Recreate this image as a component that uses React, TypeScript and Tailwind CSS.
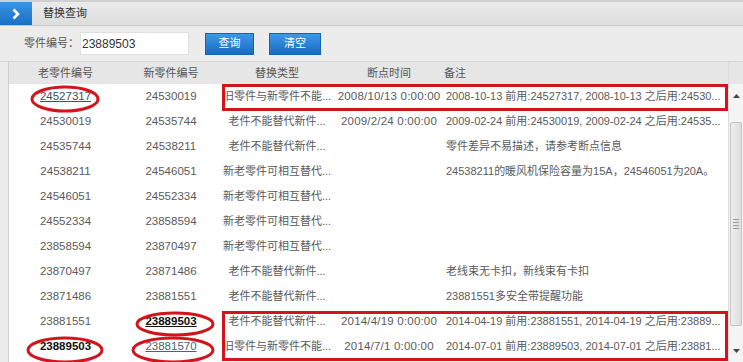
import React from "react";

const rows: { c: string[] }[] = [
  { c: ["24527317", "24530019", "旧零件与新零件不能...", "2008/10/13 0:00:00", "2008-10-13 前用:24527317, 2008-10-13 之后用:24530..."] },
  { c: ["24530019", "24535744", "老件不能替代新件...", "2009/2/24 0:00:00", "2009-02-24 前用:24530019, 2009-02-24 之后用:24535..."] },
  { c: ["24535744", "24538211", "老件不能替代新件...", "", "零件差异不易描述，请参考断点信息"] },
  { c: ["24538211", "24546051", "新老零件可相互替代...", "", "24538211的暖风机保险容量为15A，24546051为20A。"] },
  { c: ["24546051", "24552334", "新老零件可相互替代...", "", ""] },
  { c: ["24552334", "23858594", "新老零件可相互替代...", "", ""] },
  { c: ["23858594", "23870497", "新老零件可相互替代...", "", ""] },
  { c: ["23870497", "23871486", "老件不能替代新件...", "", "老线束无卡扣，新线束有卡扣"] },
  { c: ["23871486", "23881551", "老件不能替代新件...", "", "23881551多安全带提醒功能"] },
  { c: ["23881551", "23889503", "老件不能替代新件...", "2014/4/19 0:00:00", "2014-04-19 前用:23881551, 2014-04-19 之后用:23889..."] },
  { c: ["23889503", "23881570", "旧零件与新零件不能...", "2014/7/1 0:00:00", "2014-07-01 前用:23889503, 2014-07-01 之后用:23881..."] },
];

function cellStyle(r: number, col: number): string {
  if (r === 0 && col === 0) return "underline text-[#3d4f66]";
  if (r === 9 && col === 1) return "underline font-bold text-[#111]";
  if (r === 10 && col === 0) return "font-bold text-[#111]";
  if (r === 10 && col === 1) return "underline text-[#4a6080]";
  return "";
}

export default function App() {
  const font = { fontFamily: '"Liberation Sans", "Noto Sans CJK SC", sans-serif' };
  return (
    <div
      className="relative w-[743px] h-[362px] overflow-hidden bg-[#ececec] text-[11px] text-[#5a5a5a] flex flex-col"
      style={font}
    >
      {/* title bar */}
      <div className="h-[26px] flex items-stretch border-t-[2px] border-[#cfcfcf] border-b border-b-[#c8c8c8] bg-gradient-to-b from-[#ebebeb] to-[#dddddd]">
        <div className="w-[32px] flex items-center justify-center bg-gradient-to-b from-[#3a94e4] to-[#1a6fc6]">
          <svg width="10" height="12" viewBox="0 0 10 12">
            <path d="M2.5 1.5 L7 6 L2.5 10.5" stroke="#fff" strokeWidth="2.6" fill="none" />
          </svg>
        </div>
        <div className="flex items-center pl-[11px] text-[#333]">替换查询</div>
      </div>

      {/* search row */}
      <div className="h-[36px] flex items-center pl-[24px] border-b border-[#d6d6d6]">
        <span className="text-[#555]">零件编号：</span>
        <div className="ml-[1px] w-[109px] h-[23px] bg-white border border-[#e0e0e0] flex items-center pl-[1px] text-[12px] text-[#333]">
          23889503
        </div>
        <button className="ml-[16px] w-[49px] h-[22px] text-white text-[11px] bg-gradient-to-b from-[#3d98e6] to-[#166cc4] border border-[#1462b2]">
          查询
        </button>
        <button className="ml-[15px] w-[52px] h-[22px] text-white text-[11px] bg-gradient-to-b from-[#3d98e6] to-[#166cc4] border border-[#1462b2]">
          清空
        </button>
      </div>

      {/* table area */}
      <div className="flex flex-1 pl-[8px]">
        <div className="w-[720px] flex flex-col bg-white border-l border-[#d0d0d0]">
          <div className="h-[22px] flex items-center bg-[#e6e6e6] text-[#555]">
            <div className="w-[113px] text-center">老零件编号</div>
            <div className="w-[98px] text-center">新零件编号</div>
            <div className="w-[114px] text-center">替换类型</div>
            <div className="w-[110px] text-center">断点时间</div>
            <div className="flex-1">备注</div>
          </div>
          {rows.map((row, r) => (
            <div key={r} className="h-[25px] flex items-center whitespace-nowrap">
              <div className="w-[113px] text-center text-[11.5px]">
                <span className={cellStyle(r, 0)}>{row.c[0]}</span>
              </div>
              <div className="w-[98px] text-center text-[11.5px]">
                <span className={cellStyle(r, 1)}>{row.c[1]}</span>
              </div>
              <div className="w-[114px] text-center">{row.c[2]}</div>
              <div className="w-[110px] text-center text-[11.5px] tracking-[0.2px]">{row.c[3]}</div>
              <div className="flex-1 pl-[2px] overflow-hidden">{row.c[4]}</div>
            </div>
          ))}
        </div>

        {/* scrollbar */}
        <div className="w-[15px] flex flex-col bg-[#f4f4f4] border-l border-[#dcdcdc]">
          <div className="h-[22px] bg-[#e6e6e6]" />
          <div className="h-[24px] flex items-center justify-center">
            <svg width="7" height="4" viewBox="0 0 7 4">
              <path d="M0 4 L3.5 0 L7 4 Z" fill="#444" />
            </svg>
          </div>
          <div className="flex-1 flex flex-col px-[1px] py-[14px]">
            <div className="flex-1 bg-gradient-to-r from-[#eeeeee] to-[#dedede] border border-[#c4c4c4] rounded-[2px] flex items-center justify-center">
              <div className="flex flex-col gap-[2px]">
                <div className="w-[6px] h-[1px] bg-[#9a9a9a]" />
                <div className="w-[6px] h-[1px] bg-[#9a9a9a]" />
                <div className="w-[6px] h-[1px] bg-[#9a9a9a]" />
                <div className="w-[6px] h-[1px] bg-[#9a9a9a]" />
              </div>
            </div>
          </div>
          <div className="h-[22px] flex items-center justify-center">
            <svg width="7" height="4" viewBox="0 0 7 4">
              <path d="M0 0 L3.5 4 L7 0 Z" fill="#444" />
            </svg>
          </div>
        </div>
      </div>

      {/* red annotations overlay */}
      <svg className="absolute inset-0 pointer-events-none" width="743" height="362" viewBox="0 0 743 362">
        <g fill="none" stroke="#d2141c" strokeWidth="3">
          <rect x="223.5" y="85.5" width="503" height="24" />
          <rect x="223.5" y="312.5" width="503" height="47" />
          <ellipse cx="65" cy="99" rx="33" ry="12" />
          <ellipse cx="175" cy="324" rx="38" ry="11" />
          <ellipse cx="65" cy="350" rx="37" ry="12" />
          <ellipse cx="173" cy="350" rx="40" ry="12" />
        </g>
      </svg>
    </div>
  );
}
